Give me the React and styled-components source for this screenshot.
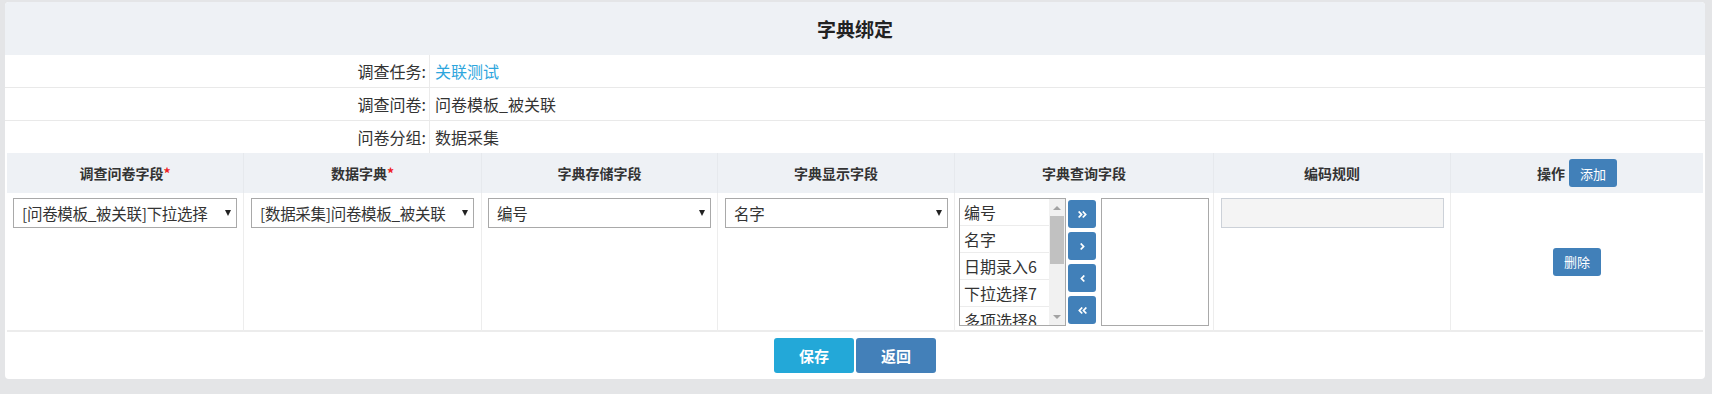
import React from "react";
import styled, { createGlobalStyle } from "styled-components";
import { FaAngleDoubleRight, FaAngleRight, FaAngleLeft, FaAngleDoubleLeft } from "react-icons/fa";

const GlobalStyle = createGlobalStyle`
  html, body { margin: 0; padding: 0; }
  body {
    background: #e4e5e7;
    font-family: "Noto Sans CJK SC", "Liberation Sans", sans-serif;
    color: #333;
  }
  * { box-sizing: border-box; }
`;

const Page = styled.div`
  padding: 2px 7px 15px 5px;
`;

const Card = styled.div`
  background: #fff;
  border-radius: 4px;
  overflow: hidden;
`;

const TitleBar = styled.div`
  height: 53px;
  background: #eef1f5;
  display: flex;
  align-items: center;
  justify-content: center;
  font-size: 19px;
  font-weight: bold;
  color: #222;
`;

const InfoRow = styled.div`
  display: grid;
  grid-template-columns: 425px 1fr;
  height: ${(p) => (p.$last ? "32px" : "33px")};
  border-bottom: ${(p) => (p.$last ? "none" : "1px solid #e9e9e9")};
`;

const InfoLabel = styled.div`
  text-align: right;
  padding-right: 3px;
  border-right: 1px solid #ebebeb;
  font-size: 16px;
  line-height: 32px;
  color: #333;
`;

const InfoValue = styled.div`
  padding-left: 5px;
  font-size: 16px;
  line-height: 32px;
  color: ${(p) => (p.$link ? "#2ea6dd" : "#333")};
`;

const Table = styled.div`
  margin: 0 2px;
  display: grid;
  grid-template-columns: 236px 238px 236px 237px 259px 237px 1fr;
`;

const HeadCell = styled.div`
  height: 40px;
  background: #eef1f5;
  border-left: ${(p) => (p.$first ? "none" : "1px solid #e6e9ed")};
  display: flex;
  align-items: center;
  justify-content: center;
  gap: 4px;
  font-size: 14px;
  font-weight: bold;
  color: #333;
`;

const Star = styled.span`
  color: #ee1d24;
  font-weight: bold;
`;

const BodyCell = styled.div`
  height: 139px;
  border-left: ${(p) => (p.$first ? "none" : "1px solid #ededed")};
  border-bottom: 2px solid #ececec;
  padding: ${(p) => p.$pad || "5px 6px 0 6px"};
  display: flex;
  align-items: ${(p) => (p.$center ? "center" : "flex-start")};
  justify-content: ${(p) => (p.$center ? "center" : "flex-start")};
`;

const SelectBox = styled.div`
  width: 100%;
  height: 30px;
  border: 1px solid #a9a9a9;
  background: #fff;
  display: flex;
  align-items: center;
  padding: 0 5px 0 8px;
  font-size: 15.5px;
  letter-spacing: -0.3px;
  color: #333;
`;

const SelectText = styled.span`
  flex: 1;
  min-width: 0;
  white-space: nowrap;
  overflow: hidden;
  line-height: 28px;
`;

const Caret = styled.span`
  flex: none;
  width: 0;
  height: 0;
  border-left: 3px solid transparent;
  border-right: 3px solid transparent;
  border-top: 6px solid #222;
  margin-left: 3px;
`;

const DualList = styled.div`
  display: flex;
  align-items: center;
  height: 128px;
`;

const ListBox = styled.div`
  width: ${(p) => p.$w}px;
  height: 128px;
  border: 1px solid #a9a9a9;
  background: #fff;
  display: flex;
  overflow: hidden;
`;

const ListItems = styled.div`
  flex: 1;
  overflow: hidden;
`;

const ListItem = styled.div`
  height: 27px;
  border-bottom: 1px solid #ececec;
  padding-left: 4px;
  font-size: 16px;
  line-height: 26px;
  color: #333;
  white-space: nowrap;
`;

const ScrollTrack = styled.div`
  width: 16px;
  background: #f1f1f1;
  display: flex;
  flex-direction: column;
  align-items: center;
`;

const ScrollArrow = styled.div`
  height: 17px;
  display: flex;
  align-items: center;
  justify-content: center;
  &::before {
    content: "";
    width: 0;
    height: 0;
    border-left: 4px solid transparent;
    border-right: 4px solid transparent;
    ${(p) => (p.$down ? "border-top: 4px solid #a3a3a3;" : "border-bottom: 4px solid #a3a3a3;")}
  }
`;

const ScrollThumb = styled.div`
  width: 14px;
  height: 48px;
  background: #c1c1c1;
`;

const ScrollSpacer = styled.div`
  flex: 1;
`;

const MoveButtons = styled.div`
  display: flex;
  flex-direction: column;
  gap: 4px;
  margin: 0 5px 0 2px;
`;

const MoveButton = styled.div`
  width: 28px;
  height: 28px;
  border-radius: 3px;
  background: #4180b9;
  color: #fff;
  display: flex;
  align-items: center;
  justify-content: center;
  font-size: 11px;
`;

const ReadonlyInput = styled.div`
  width: 100%;
  height: 30px;
  border: 1px solid #ccd1d8;
  background: #f4f4f4;
`;

const SmallButton = styled.div`
  width: 48px;
  height: 28px;
  border-radius: 3px;
  background: #4180b9;
  color: #fff;
  display: flex;
  align-items: center;
  justify-content: center;
  font-size: 13px;
  font-weight: normal;
`;

const Footer = styled.div`
  display: flex;
  justify-content: center;
  gap: 2px;
  padding: 6px 0;
`;

const BigButton = styled.div`
  width: 80px;
  height: 35px;
  border-radius: 3px;
  background: ${(p) => p.$bg};
  color: #fff;
  display: flex;
  align-items: center;
  justify-content: center;
  font-size: 15px;
  font-weight: bold;
`;

const info = [
  { label: "调查任务:", value: "关联测试", link: true },
  { label: "调查问卷:", value: "问卷模板_被关联" },
  { label: "问卷分组:", value: "数据采集" },
];

const heads = ["调查问卷字段", "数据字典", "字典存储字段", "字典显示字段", "字典查询字段", "编码规则"];
const required = [true, true, false, false, false, false];

const options = ["编号", "名字", "日期录入6", "下拉选择7", "多项选择8"];

function Select({ text }) {
  return (
    <SelectBox>
      <SelectText>{text}</SelectText>
      <Caret />
    </SelectBox>
  );
}

export default function App() {
  return (
    <>
      <GlobalStyle />
      <Page>
        <Card>
          <TitleBar>字典绑定</TitleBar>
          {info.map((r, i) => (
            <InfoRow key={r.label} $last={i === info.length - 1}>
              <InfoLabel>{r.label}</InfoLabel>
              <InfoValue $link={r.link}>{r.value}</InfoValue>
            </InfoRow>
          ))}
          <Table>
            {heads.map((h, i) => (
              <HeadCell key={h} $first={i === 0}>
                <span>
                  {h}
                  {required[i] && <Star>*</Star>}
                </span>
              </HeadCell>
            ))}
            <HeadCell>
              <span>操作</span>
              <SmallButton>添加</SmallButton>
            </HeadCell>

            <BodyCell $first>
              <Select text="[问卷模板_被关联]下拉选择" />
            </BodyCell>
            <BodyCell $pad="5px 7px 0 7px">
              <Select text="[数据采集]问卷模板_被关联" />
            </BodyCell>
            <BodyCell>
              <Select text="编号" />
            </BodyCell>
            <BodyCell $pad="5px 6px 0 7px">
              <Select text="名字" />
            </BodyCell>
            <BodyCell $pad="5px 4px 0 4px">
              <DualList>
                <ListBox $w={107}>
                  <ListItems>
                    {options.map((o) => (
                      <ListItem key={o}>{o}</ListItem>
                    ))}
                  </ListItems>
                  <ScrollTrack>
                    <ScrollArrow />
                    <ScrollThumb />
                    <ScrollSpacer />
                    <ScrollArrow $down />
                  </ScrollTrack>
                </ListBox>
                <MoveButtons>
                  <MoveButton><FaAngleDoubleRight /></MoveButton>
                  <MoveButton><FaAngleRight /></MoveButton>
                  <MoveButton><FaAngleLeft /></MoveButton>
                  <MoveButton><FaAngleDoubleLeft /></MoveButton>
                </MoveButtons>
                <ListBox $w={108} />
              </DualList>
            </BodyCell>
            <BodyCell $pad="5px 6px 0 7px">
              <ReadonlyInput />
            </BodyCell>
            <BodyCell $center $pad="0">
              <SmallButton>删除</SmallButton>
            </BodyCell>
          </Table>
          <Footer>
            <BigButton $bg="#23a8d8">保存</BigButton>
            <BigButton $bg="#4380b9">返回</BigButton>
          </Footer>
        </Card>
      </Page>
    </>
  );
}
